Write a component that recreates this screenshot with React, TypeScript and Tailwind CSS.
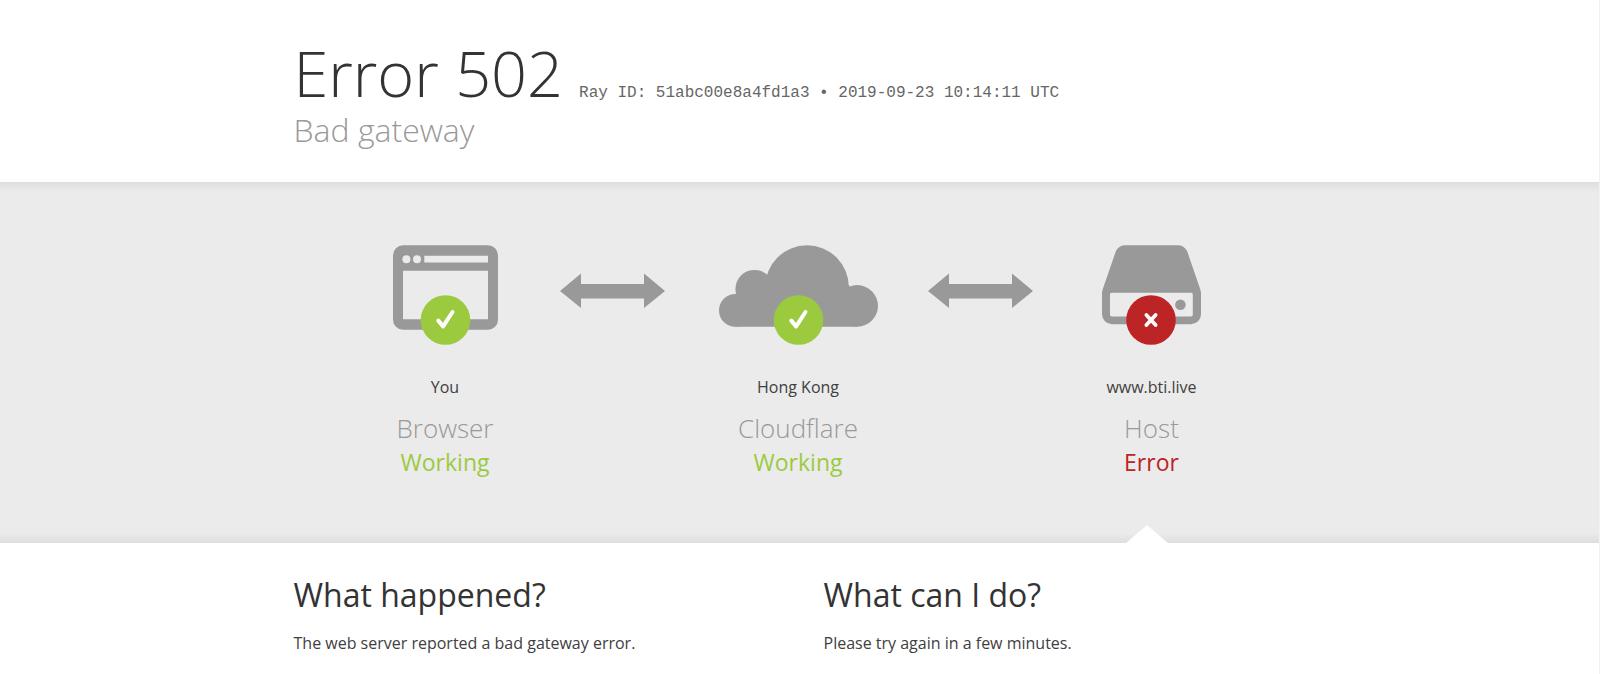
import type { ReactNode } from "react";

function OkBadge({ cx }: { cx: number }) {
  return (
    <g>
      <circle cx={cx} cy="75" r="24.8" fill="#9bca3e" />
      <path
        d={`M${cx - 7.2} 75.6 L${cx - 2.4} 81.4 L${cx + 7} 67`}
        fill="none"
        stroke="#fff"
        strokeWidth="4"
        strokeLinecap="round"
        strokeLinejoin="round"
      />
    </g>
  );
}

function ErrorBadge({ cx }: { cx: number }) {
  return (
    <g>
      <circle cx={cx} cy="75" r="24.8" fill="#bd2426" />
      <path
        d={`M${cx - 4.6} 70 L${cx + 4.6} 80 M${cx + 4.6} 70 L${cx - 4.6} 80`}
        stroke="#fff"
        strokeWidth="3.8"
        strokeLinecap="round"
      />
    </g>
  );
}

function BrowserIcon() {
  return (
    <svg width="105" height="100" viewBox="0 0 105 100" aria-hidden="true">
      <path
        fillRule="evenodd"
        fill="#999"
        d="M10 0.3H95A10 10 0 0 1 105 10.3V74.7A10 10 0 0 1 95 84.7H10A10 10 0 0 1 0 74.7V10.3A10 10 0 0 1 10 0.3ZM10 25.7V74.2H95V25.7ZM31.3 10.8V17.5H95V10.8Z"
      />
      <circle cx="13.4" cy="14.2" r="4" fill="#ebebeb" />
      <circle cx="24" cy="14.2" r="4" fill="#ebebeb" />
      <OkBadge cx={52.5} />
    </svg>
  );
}

function CloudIcon() {
  return (
    <svg width="159" height="100" viewBox="0 0 159 100" aria-hidden="true">
      <g fill="#999">
        <circle cx="16.3" cy="65.4" r="16.3" />
        <circle cx="35.5" cy="44" r="19.1" />
        <circle cx="88" cy="42" r="41.8" />
        <circle cx="138.2" cy="60.9" r="20.8" />
        <path d="M16 49.2L35 40H130L138 60V81.7H16Z" />
      </g>
      <OkBadge cx={79.5} />
    </svg>
  );
}

function HostIcon() {
  return (
    <svg width="99" height="100" viewBox="0 0 99 100" aria-hidden="true">
      <path
        fillRule="evenodd"
        fill="#999"
        d="M23.5 0.3H75.5C80.5 0.3 84 3 85.6 7.5L98 43.5C98.7 45.5 99 47 99 49V69.3A10 10 0 0 1 89 79.3H10A10 10 0 0 1 0 69.3V49C0 47 0.3 45.5 1 43.5L13.4 7.5C15 3 18.5 0.3 23.5 0.3ZM9.8 47.7Q8 47.7 8 49.5V69.8Q8 71.6 9.8 71.6H89Q90.8 71.6 90.8 69.8V49.5Q90.8 47.7 89 47.7Z"
      />
      <circle cx="78.4" cy="59.8" r="5.3" fill="#999" />
      <ErrorBadge cx={49} />
    </svg>
  );
}

function Arrow() {
  return (
    <svg className="mt-7" width="105" height="36" viewBox="0 0 105 36" aria-hidden="true">
      <path
        fill="#999"
        d="M0 18L21 0.5V11H84V0.5L105 18L84 35V25.5H21V35Z"
      />
    </svg>
  );
}

type StatusProps = {
  icon: ReactNode;
  place: string;
  name: string;
  status: string;
  ok?: boolean;
  className?: string;
  children?: ReactNode;
};

function Status({ icon, place, name, status, ok, className = "", children }: StatusProps) {
  return (
    <div className={`relative flex flex-col items-center pb-[63px] text-center ${className}`}>
      {icon}
      <span className="mt-[30px] text-base leading-6 font-normal">{place}</span>
      <h3 className="mt-[13px] text-[26px] leading-8 text-[#999]">{name}</h3>
      <span
        className={`text-[23px] leading-9 font-normal ${ok ? "text-[#9bca3e]" : "text-[#bd2426]"}`}
      >
        {status}
      </span>
      {children}
    </div>
  );
}

export default function App() {
  return (
    <div className="border-r border-[#f1f1f1] bg-white font-['Open_Sans',sans-serif] font-light text-[#404040]">
      <header className="mx-auto max-w-[1012px] pt-9 pb-8">
        <h1 className="flex flex-wrap items-baseline gap-x-4">
          <span className="text-[63px] leading-[74px] text-[#333]">Error 502</span>
          <span className="font-['Liberation_Mono',monospace] text-base text-[#666]">
            Ray ID: 51abc00e8a4fd1a3 • 2019-09-23 10:14:11 UTC
          </span>
        </h1>
        <h2 className="text-[32px] leading-10 text-[#999]">Bad gateway</h2>
      </header>

      <section className="bg-[#ebebeb] bg-[linear-gradient(to_bottom,#dedede,#ebebeb_10px,#ebebeb_calc(100%_-_10px),#dedede)] pt-[63px]">
        <div className="mx-auto grid max-w-[938px] grid-cols-[229fr_105px_263fr_105px_236fr]">
          <Status icon={<BrowserIcon />} place="You" name="Browser" status="Working" ok />
          <Arrow />
          <Status
            icon={<CloudIcon />}
            place="Hong Kong"
            name="Cloudflare"
            status="Working"
            className="pl-1"
            ok
          />
          <Arrow />
          <Status
            icon={<HostIcon />}
            place="www.bti.live"
            name="Host"
            status="Error"
            className="pl-0.5"
          >
            <svg
              className="absolute bottom-0 left-1/2 -ml-1 -translate-x-1/2"
              width="42"
              height="18"
              viewBox="0 0 42 18"
              aria-hidden="true"
            >
              <path d="M0 18L21 0L42 18Z" fill="#fff" />
            </svg>
          </Status>
        </div>
      </section>

      <main className="mx-auto grid max-w-[1012px] grid-cols-2 gap-12 pt-8 pb-5 font-normal">
        <section>
          <h2 className="text-[32px] leading-10 text-[#333]">What happened?</h2>
          <p className="mt-4 text-base leading-6">The web server reported a bad gateway error.</p>
        </section>
        <section>
          <h2 className="text-[32px] leading-10 text-[#333]">What can I do?</h2>
          <p className="mt-4 text-base leading-6">Please try again in a few minutes.</p>
        </section>
      </main>
    </div>
  );
}
